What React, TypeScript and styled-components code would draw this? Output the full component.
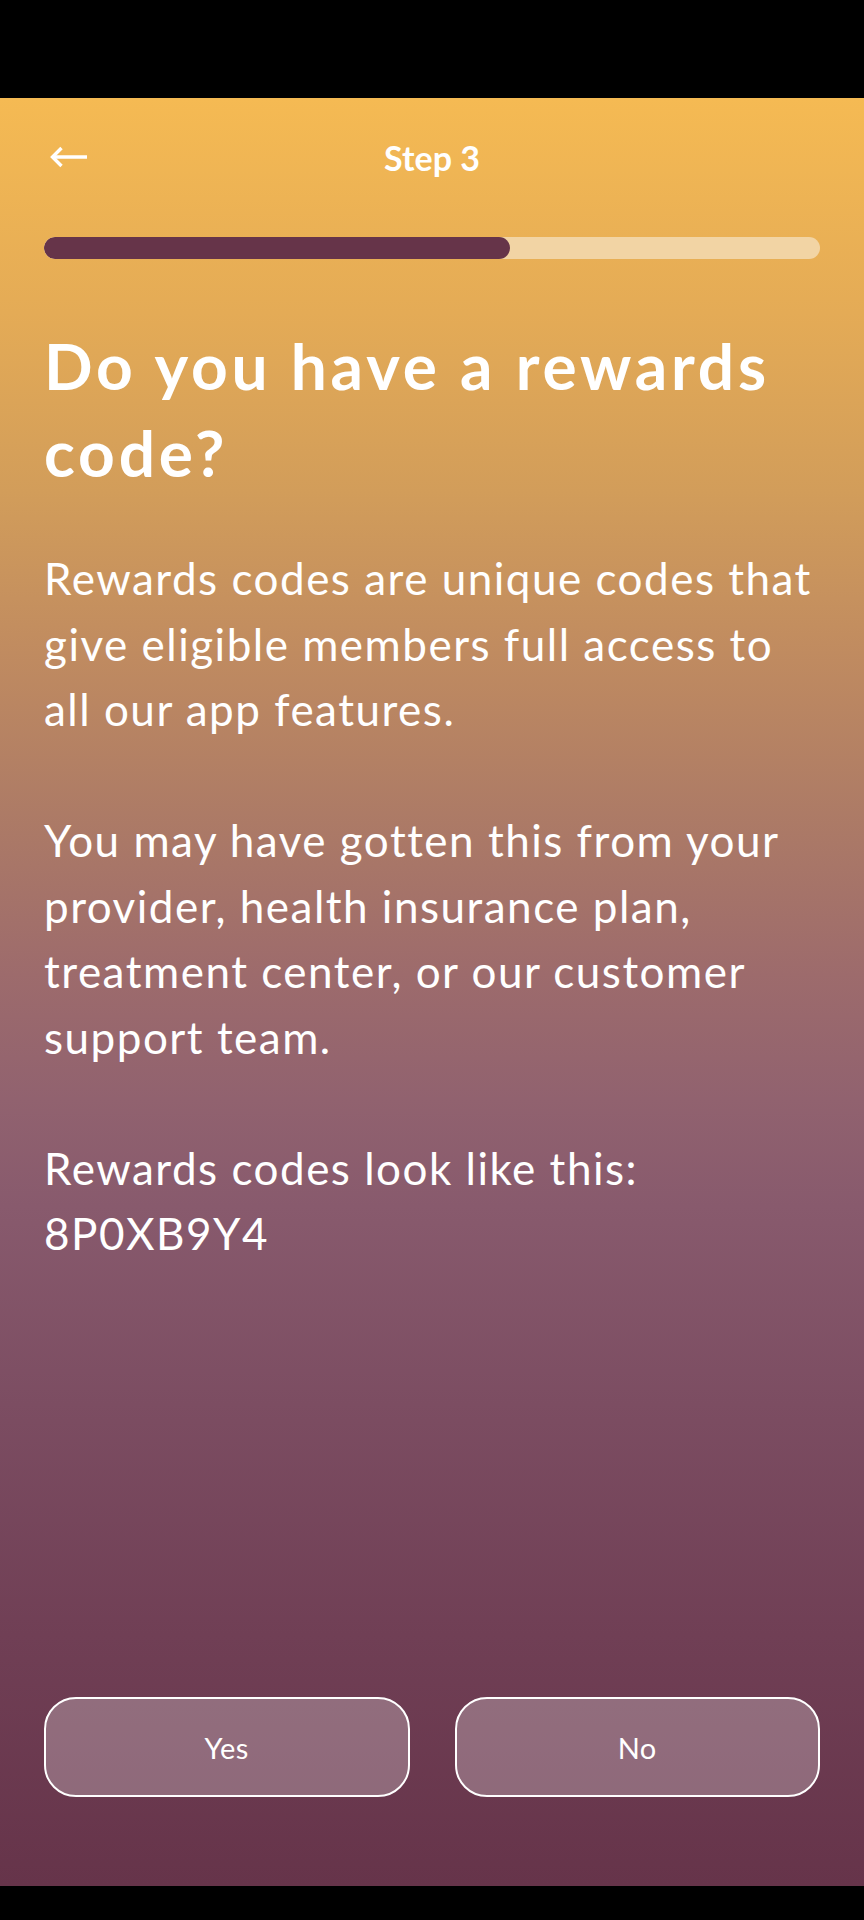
import React from "react";
import styled, { createGlobalStyle } from "styled-components";

const GlobalStyle = createGlobalStyle`
  html, body { margin: 0; padding: 0; background: #000; }
  body { font-family: Lato, "Noto Sans", sans-serif; -webkit-font-smoothing: antialiased; }
`;

const Frame = styled.div`
  width: 864px;
  height: 1920px;
  display: flex;
  flex-direction: column;
  background: #000;
`;

const StatusBar = styled.div`
  height: 98px;
  flex: none;
  background: #000;
`;

const NavBar = styled.div`
  height: 34px;
  flex: none;
  background: #000;
`;

const Screen = styled.main`
  flex: 1;
  display: flex;
  flex-direction: column;
  padding: 0 44px 89px;
  color: #fff;
  background: linear-gradient(
    180deg,
    #f5ba53 0%,
    #e4ab56 12%,
    #d29d5a 22%,
    #c08b60 31%,
    #ad7b66 40%,
    #9d6b6c 49%,
    #91626f 56%,
    #885a6d 62%,
    #7c4d62 73%,
    #703f55 86%,
    #66344a 100%
  );
`;

const Header = styled.header`
  height: 118px;
  display: grid;
  grid-template-columns: 80px 1fr 80px;
  align-items: center;
`;

const BackButton = styled.button`
  width: 44px;
  height: 40px;
  padding: 0;
  margin-left: 4px;
  border: none;
  background: transparent;
  display: flex;
  align-items: center;
  cursor: pointer;
`;

const StepTitle = styled.h1`
  margin: 0;
  text-align: center;
  font-size: 34px;
  font-weight: 700;
  line-height: 40px;
  padding-top: 2px;
`;

const Track = styled.div`
  margin-top: 21px;
  height: 22px;
  border-radius: 11px;
  background: #f2d4a4;
  overflow: hidden;
`;

const Fill = styled.div`
  height: 100%;
  border-radius: 11px;
  background: #663449;
`;

const Question = styled.h2`
  margin: 63px 0 0;
  font-size: 64px;
  font-weight: 700;
  line-height: 87px;
  letter-spacing: 3.8px;
`;

const Body = styled.div`
  margin-top: 50px;
  font-size: 44px;
  line-height: 65.5px;
  font-weight: 400;
  letter-spacing: 1.5px;
`;

const Paragraph = styled.p`
  margin: 0 0 65.5px;
  &:last-child { margin-bottom: 0; }
`;

const Spacer = styled.div`
  flex: 1;
`;

const Actions = styled.div`
  display: grid;
  grid-template-columns: 1fr 1fr;
  gap: 45px;
`;

const ChoiceButton = styled.button`
  height: 100px;
  border: 2px solid #fff;
  border-radius: 32px;
  background: rgba(255, 255, 255, 0.25);
  color: #fff;
  font-family: Lato, "Noto Sans", sans-serif;
  font-size: 29px;
  font-weight: 400;
  letter-spacing: 0.5px;
  cursor: pointer;
`;

const BackArrow = () => (
  <svg width="40" height="24" viewBox="0 0 40 24" fill="none">
    <path d="M4 12 H39" stroke="#fff" strokeWidth="3.4" />
    <path d="M13.5 3 L4.5 12 L13.5 21" stroke="#fff" strokeWidth="3.4" />
  </svg>
);

export default function App() {
  const progress = 0.6;
  return (
    <>
      <GlobalStyle />
      <Frame>
        <StatusBar />
        <Screen>
          <Header>
            <BackButton aria-label="Back">
              <BackArrow />
            </BackButton>
            <StepTitle>Step 3</StepTitle>
            <span />
          </Header>
          <Track>
            <Fill style={{ width: `${progress * 100}%` }} />
          </Track>
          <Question>Do you have a rewards code?</Question>
          <Body>
            <Paragraph>
              Rewards codes are unique codes that give eligible members full access to all our app features.
            </Paragraph>
            <Paragraph>
              You may have gotten this from your provider, health insurance plan, treatment center, or our customer support team.
            </Paragraph>
            <Paragraph>
              Rewards codes look like this:
              <br />
              8P0XB9Y4
            </Paragraph>
          </Body>
          <Spacer />
          <Actions>
            <ChoiceButton>Yes</ChoiceButton>
            <ChoiceButton>No</ChoiceButton>
          </Actions>
        </Screen>
        <NavBar />
      </Frame>
    </>
  );
}
